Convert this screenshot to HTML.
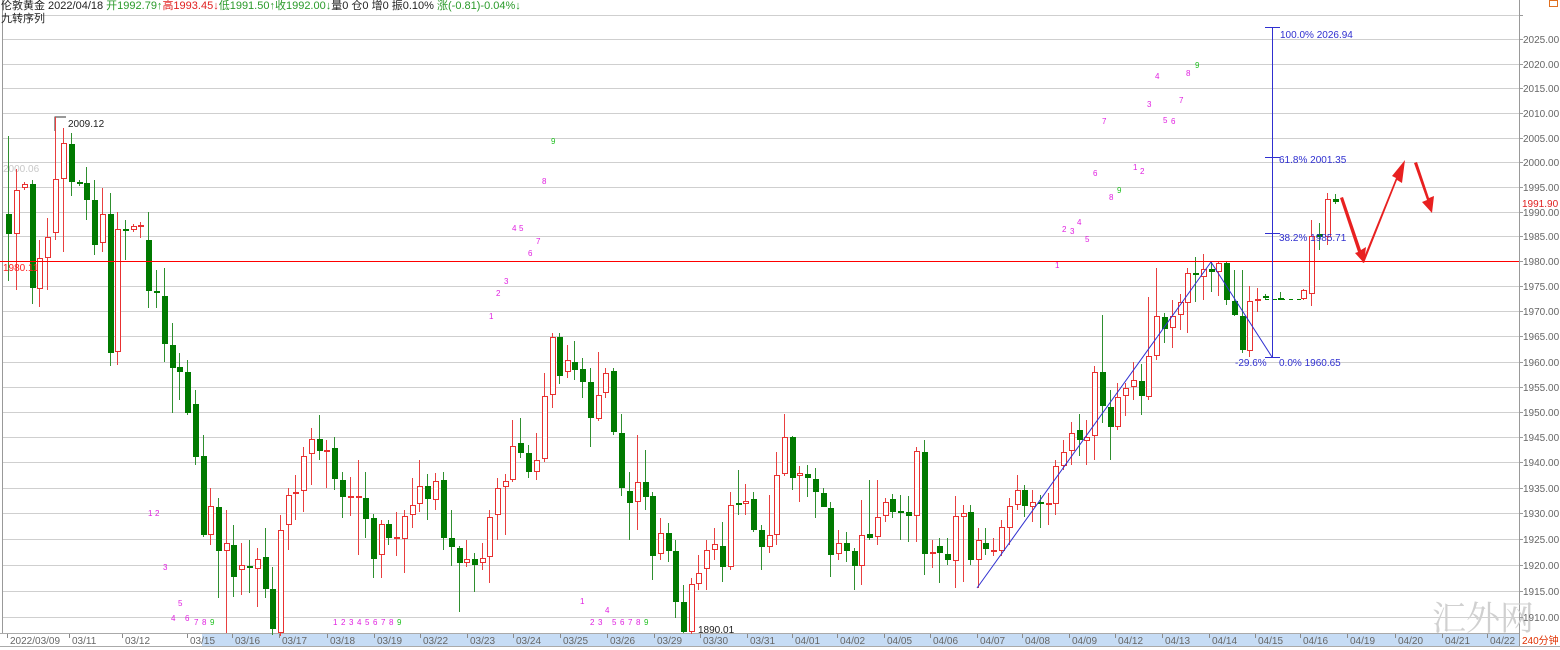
<!DOCTYPE html>
<html><head><meta charset="utf-8"><style>
html,body{margin:0;padding:0;background:#fff;width:1560px;height:650px;overflow:hidden}
svg{display:block}
text{font-family:"Liberation Sans","Noto Sans CJK SC",sans-serif}
</style></head><body>
<svg id="s" width="1560" height="650" xmlns="http://www.w3.org/2000/svg">
<rect width="1560" height="650" fill="#fff"/>
<g id="grid" stroke="#cfcfcf" stroke-width="1"></g>
<line x1="2.5" y1="0" x2="2.5" y2="633" stroke="#999"/>
<line x1="1519.5" y1="0" x2="1519.5" y2="646" stroke="#999"/>
<rect x="202" y="633" width="1317" height="13" fill="#c6dcf5"/>
<line x1="0" y1="633.5" x2="1519" y2="633.5" stroke="#aaa"/>
<line x1="0" y1="646.5" x2="1560" y2="646.5" stroke="#aaa"/>
<g id="dates" font-size="10" fill="#666"></g>
<text x="1522" y="644" font-size="10" fill="#e03000">240分钟</text>
<text x="1432" y="630" font-size="34" fill="#d0d0d0" style="font-family:'Noto Serif CJK SC',serif">汇外网</text>
<rect x="1549.5" y="0.5" width="8" height="6" fill="none" stroke="#e07020"/>
<text x="3" y="172" font-size="10" fill="#c8c8c8">2000.06</text>
<polyline points="55,131 55,117 66,117" fill="none" stroke="#333"/>
<text x="68" y="127" font-size="10" fill="#222">2009.12</text>
<text x="698" y="633" font-size="10" fill="#222">1890.01</text>
<g id="candles"></g>
<rect x="0" y="261" width="1519" height="1" fill="#ff0000"/>
<text x="3" y="271" font-size="10" fill="#ff2020">1980.11</text>
<line x1="1265" y1="299.5" x2="1302" y2="299.5" stroke="#008000" stroke-dasharray="4,4"/>
<line x1="977" y1="588" x2="1211" y2="262" stroke="#3030d0"/>
<line x1="1211" y1="262" x2="1272" y2="357" stroke="#3030d0"/>
<g stroke="#3030d0">
<line x1="1272.5" y1="27" x2="1272.5" y2="357"/>
<line x1="1265" y1="27.5" x2="1280" y2="27.5"/>
<line x1="1265" y1="157.5" x2="1280" y2="157.5"/>
<line x1="1265" y1="233.5" x2="1280" y2="233.5"/>
<line x1="1265" y1="357.5" x2="1280" y2="357.5"/>
</g>
<g font-size="10" fill="#3030d0">
<text x="1280" y="38">100.0% 2026.94</text>
<text x="1279" y="163">61.8% 2001.35</text>
<text x="1279" y="241">38.2% 1985.71</text>
<text x="1279" y="366">0.0% 1960.65</text>
<text x="1235" y="366">-29.6%</text>
</g>
<g fill="#e82020">
<polygon points="1340,198 1343,197 1361,250 1366,247 1364,263 1355,253 1358,252"/>
<polygon points="1362,262 1364,263 1397,180 1402,183 1405,160 1392,176 1396,178"/>
<polygon points="1414,163 1417,162 1429,198 1434,196 1432,213 1422,202 1427,200"/>
</g>
<g id="nine" font-size="8"></g>
<g id="axis" font-size="10" fill="#666"></g>
<rect x="1521" y="197" width="38" height="12" fill="#fff"/>
<text x="1522" y="207" font-size="10" fill="#e02020">1991.90</text>
<text x="1" y="9" font-size="11" fill="#222">伦敦黄金 2022/04/18 <tspan fill="#2a9a2a">开1992.79↑</tspan><tspan fill="#e02020">高1993.45↓</tspan><tspan fill="#2a9a2a">低1991.50↑收1992.00↓</tspan>量0  仓0  增0 振0.10% <tspan fill="#2a9a2a">涨(-0.81)-0.04%↓</tspan></text>
<text x="1" y="22" font-size="11" fill="#222">九转序列</text>
</svg>
<script>
var NS="http://www.w3.org/2000/svg";
function el(p,t,a,txt){var e=document.createElementNS(NS,t);for(var k in a)e.setAttribute(k,a[k]);if(txt!=null)e.textContent=txt;p.appendChild(e);return e;}
var G=document.getElementById('grid');
var lv=[[2030,15],[2025,39],[2020,64],[2015,88],[2010,113],[2005,138],[2000,162],[1995,187],[1990,212],[1985,236],[1980,261],[1975,286],[1970,311],[1965,336],[1960,362],[1955,387],[1950,412],[1945,437],[1940,462],[1935,488],[1930,513],[1925,539],[1920,565],[1915,591],[1910,617]];
var A=document.getElementById('axis');
lv.forEach(function(l){if(l[0]!=1980)el(G,'line',{x1:3,x2:1519,y1:l[1]+.5,y2:l[1]+.5});
 el(A,'line',{x1:1519,x2:1523,y1:l[1]+.5,y2:l[1]+.5,stroke:'#999'});
 if(l[0]<2030)el(A,'text',{x:1523,y:l[1]+4},l[0]+'.00');});
var D=document.getElementById('dates');
[['2022/03/09',10],['03/11',72],['03/12',125],['03/15',190],['03/16',235],['03/17',282],['03/18',330],['03/19',377],['03/22',423],['03/23',470],['03/24',516],['03/25',563],['03/26',610],['03/29',657],['03/30',703],['03/31',750],['04/01',795],['04/02',840],['04/05',887],['04/06',933],['04/07',980],['04/08',1025],['04/09',1072],['04/12',1118],['04/13',1165],['04/14',1212],['04/15',1258],['04/16',1303],['04/19',1350],['04/20',1398],['04/21',1445],['04/22',1490]].forEach(function(d){
 el(D,'line',{x1:d[1]-2.5,x2:d[1]-2.5,y1:634,y2:638,stroke:'#888'});el(D,'text',{x:d[1],y:644},d[0]);});
var C=[[8,'g',214,234,136,281],[16,'r',190,234,169,290],[24,'r',184,188],[32,'g',184,288,180,304],[39,'r',258,289,240,307],[47,'r',237,258,218,290],[55,'r',179,233,117,240],[63,'r',143,179,128,252],[71,'g',144,182,133,196],[79,'g',182,184],[86,'g',183,200,167,220],[94,'g',200,245,180,255],[102,'r',214,243,188,252],[110,'g',214,353,193,366],[117,'r',229,352,212,365],[125,'g',229,230,220,260],[133,'r',226,230],[140,'r',225,227,222,238],[148,'g',240,291,212,308],[156,'g',291,292,270,308],[164,'g',296,344,268,362],[172,'g',345,368,323,413],[179,'g',367,372,353,400],[187,'g',372,413,360,415],[195,'g',404,457,390,465],[203,'g',456,535,435,537],[210,'r',506,535,488,545],[218,'g',507,551,498,598],[226,'r',543,551,510,633],[233,'g',545,577,525,597],[241,'r',565,570,543,595],[249,'g',566,567,540,593],[257,'r',559,569,548,607],[265,'g',557,589,528,598],[272,'g',589,629,567,635],[280,'r',530,633,515,636],[288,'r',495,525,488,550],[295,'r',492,493,475,520],[303,'r',456,491,447,512],[311,'r',439,454,428,485],[319,'g',439,451,415,460],[326,'r',450,452,440,488],[334,'g',448,479,437,490],[342,'g',480,497,472,518],[350,'r',496,498,477,516],[358,'r',496,498,460,555],[365,'g',498,519,472,538],[373,'g',518,559,514,578],[381,'r',524,555,520,578],[388,'g',524,538,520,545],[396,'r',537,539,512,556],[404,'r',516,539,510,573],[412,'r',505,515,478,528],[419,'r',486,504,460,512],[427,'g',486,499,474,520],[435,'r',481,500,473,510],[443,'g',480,538,472,550],[451,'g',538,547,510,566],[459,'g',548,563,546,612],[466,'r',559,563,540,567],[474,'g',559,565,553,592],[482,'r',558,563,543,570],[489,'r',517,557,510,583],[497,'r',488,515,478,540],[505,'r',481,487,474,535],[512,'r',446,480,420,482],[520,'g',443,453,418,458],[528,'g',453,472,445,478],[536,'r',460,472,433,480],[544,'r',396,459,373,462],[552,'r',337,395,333,408],[559,'g',337,376,333,384],[567,'r',360,372,345,378],[574,'g',362,370,341,380],[582,'g',369,382,358,398],[590,'g',382,418,368,447],[598,'r',395,419,352,421],[605,'r',373,393,368,398],[613,'g',371,432,368,435],[621,'g',433,488,414,496],[629,'g',491,503,472,540],[637,'r',482,502,435,530],[645,'g',482,497,450,510],[652,'g',496,556,492,580],[660,'r',533,554,518,560],[668,'g',533,551,523,562],[675,'g',551,602,540,618],[683,'g',602,632,585,633],[691,'r',584,632,578,634],[698,'r',573,584,555,590],[706,'r',550,569,540,590],[714,'r',544,550,528,560],[722,'g',546,567,522,582],[730,'r',505,567,492,570],[738,'g',503,505,470,515],[745,'r',501,504,484,515],[753,'g',499,530,492,532],[761,'g',530,547,525,570],[769,'r',535,547,495,553],[776,'r',475,535,452,545],[784,'r',437,474,414,476],[792,'g',437,478,436,490],[799,'r',473,476,466,502],[807,'g',474,478,465,497],[815,'g',479,492,468,518],[823,'g',493,507,488,500],[830,'g',508,555,502,577],[838,'r',543,554,530,560],[846,'g',543,551,532,562],[854,'g',551,566,548,590],[861,'r',535,566,500,585],[869,'g',534,538,480,540],[877,'r',517,537,480,545],[885,'r',502,516,498,522],[892,'g',499,512,494,518],[900,'g',511,513,495,540],[908,'g',512,516,496,542],[916,'r',451,516,447,542],[924,'g',452,554,440,575],[932,'r',552,554,540,568],[939,'g',546,553,538,583],[947,'g',554,560,538,565],[955,'r',516,561,496,588],[963,'r',513,517,505,582],[970,'g',512,560,505,565],[978,'r',540,560,528,588],[985,'g',543,549,528,555],[993,'r',550,552,538,556],[1001,'r',527,551,520,556],[1009,'r',506,528,498,545],[1017,'r',490,505,475,510],[1024,'g',490,506,485,517],[1032,'r',502,507,490,522],[1040,'g',502,504,495,528],[1048,'r',503,504,493,525],[1055,'r',466,504,460,515],[1063,'r',452,466,440,470],[1071,'r',433,451,422,465],[1079,'g',430,440,414,456],[1086,'r',437,441,420,465],[1094,'r',372,436,366,460],[1102,'g',372,406,315,423],[1110,'g',407,427,390,460],[1117,'r',397,427,383,430],[1125,'r',388,396,383,416],[1133,'r',380,387,362,400],[1141,'g',381,396,364,415],[1148,'r',356,397,297,400],[1156,'r',316,356,268,360],[1164,'g',317,329,313,343],[1172,'r',316,328,300,348],[1180,'r',302,315,294,330],[1187,'r',273,303,268,333],[1195,'g',273,275,257,302],[1203,'r',269,277,254,300],[1211,'g',269,272,262,292],[1218,'r',263,272,262,296],[1226,'g',263,300,262,305],[1234,'g',301,315,270,316],[1242,'g',316,350,270,353],[1249,'r',301,351,286,357],[1257,'r',299,301,288,312],[1265,'g',296,298],[1280,'g',298,299,292,300],[1303,'r',290,299,289,300],[1311,'r',236,294,220,306],[1319,'g',234,237,223,250],[1327,'r',199,237,193,245],[1335,'g',199,202,194,204]];
var K=document.getElementById('candles');
C.forEach(function(c){var x=c[0],col=c[1]=='r'?'#e83030':'#007a00';var t=c[2],b=c[3];var h=c[4]!=null?c[4]:t-2,l=c[5]!=null?c[5]:b+2;
 el(K,'line',{x1:x+.5,x2:x+.5,y1:h,y2:l,stroke:c[1]=='r'?'#e84040':'#2f8f2f'});
 if(b-t<2){el(K,'rect',{x:x-2,y:t,width:6,height:2,fill:col});}
 else if(c[1]=='r'){el(K,'rect',{x:x-1.5,y:t+.5,width:5,height:b-t-1,fill:'#fff',stroke:col});}
 else el(K,'rect',{x:x-2,y:t,width:6,height:b-t,fill:col});});
var N=document.getElementById('nine');var M='#e020e0',Gn='#20c020';
[['1',148,516],['2',155,516],['3',163,570],['5',178,606],['4',171,621],['6',185,621],['7',194,625],['8',202,625],['9',210,625,1],
['1',333,625],['2',341,625],['3',349,625],['4',357,625],['5',365,625],['6',373,625],['7',381,625],['8',389,625],['9',397,625,1],
['1',489,319],['2',496,296],['3',504,284],['4',512,231],['5',519,231],['6',528,256],['7',536,244],['8',542,184],['9',551,144,1],
['1',580,604],['4',605,613],['2',590,625],['3',598,625],['5',612,625],['6',620,625],['7',628,625],['8',636,625],['9',644,625,1],
['1',1055,268],['2',1062,232],['3',1070,234],['4',1077,225],['5',1085,242],['6',1093,176],['8',1109,200],['9',1117,193,1],['1',1133,170],['2',1140,174],['7',1102,124],['3',1147,107],['5',1163,123],['6',1171,124],['7',1179,103],['4',1155,79],['8',1186,76],['9',1195,68,1]].forEach(function(n){el(N,'text',{x:n[1],y:n[2],fill:n[3]?Gn:M},n[0]);});
</script>
</body></html>
